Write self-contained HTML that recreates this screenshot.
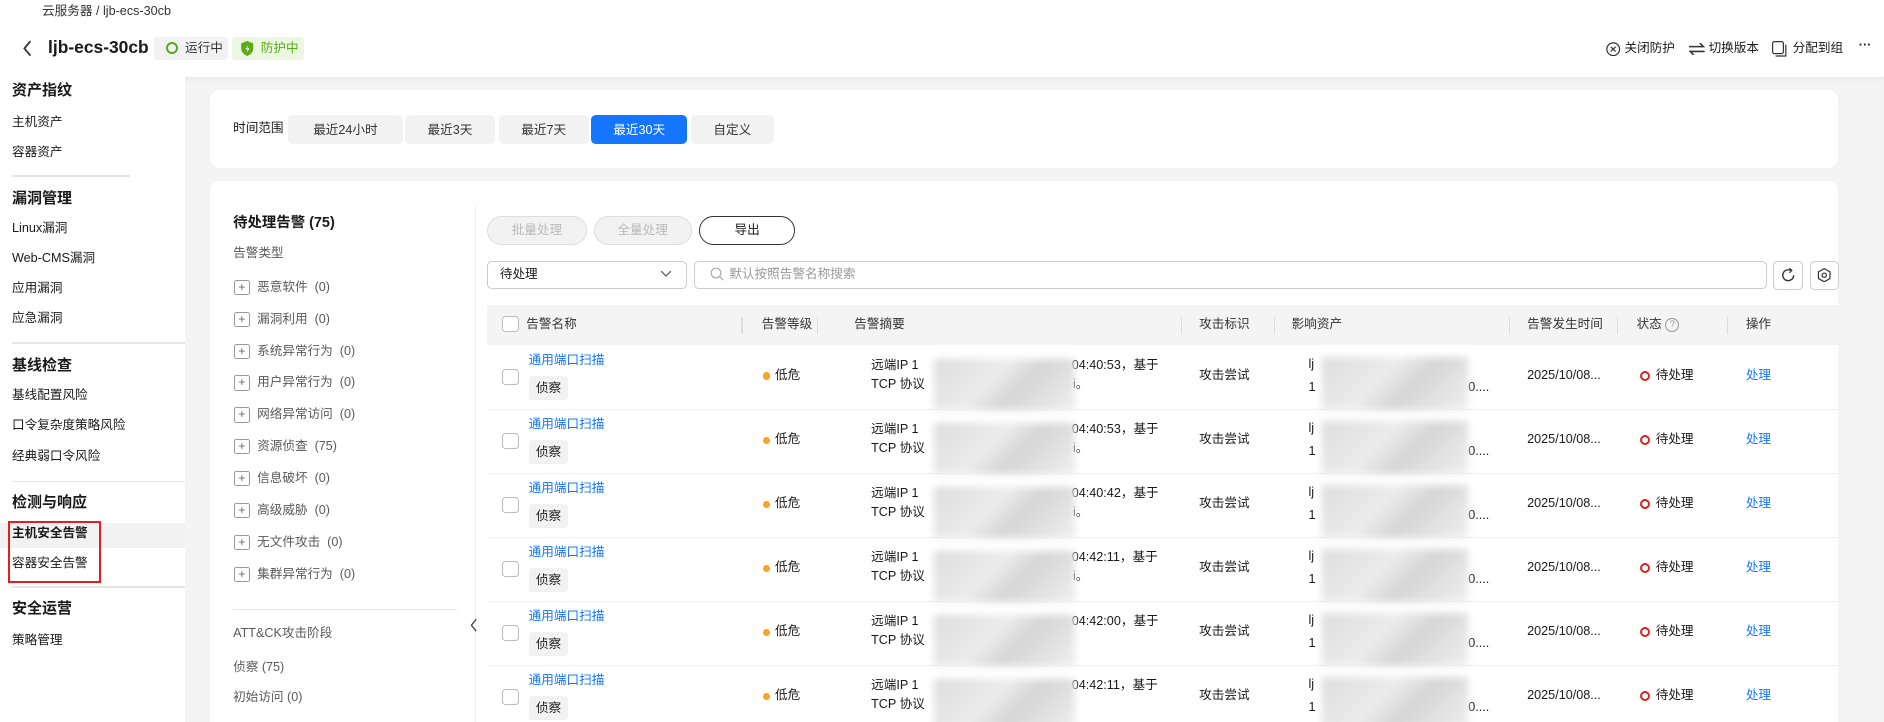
<!DOCTYPE html>
<html><head><meta charset="utf-8"><style>
html,body{margin:0;padding:0;width:1884px;height:722px;overflow:hidden;background:#f4f4f4}
#w{position:relative;width:1568px;height:601px;zoom:1.20153;font-family:"Liberation Sans","Noto Sans CJK SC",sans-serif;font-size:10.5px;line-height:1.25;color:#191919;overflow:hidden;background:#f4f4f4}
.a{position:absolute;white-space:nowrap}
.hdr{left:0;top:0;width:1568px;height:64px;background:#fff;box-shadow:0 2px 4px rgba(0,0,0,.06)}
.side{left:0;top:64px;width:154px;height:537px;background:#fff}
.sh{font-weight:bold;font-size:12.5px}
.div{height:1px;background:#e6e6e6}
.card{background:#fff;border-radius:8px}
.tb{top:96px;height:24px;line-height:25px;text-align:center;background:#f2f2f2;border-radius:4px;color:#333}
.plus{width:11px;height:11px;border:1px solid #999;border-radius:2px;text-align:center;line-height:11px;font-size:10px;color:#666}
.g{color:#595959}
.th{color:#333}
.cd{width:1px;height:14px;background:#ddd}
.cb{width:12px;height:12px;border:1px solid #bbb;border-radius:3px;background:#fff}
.lk{color:#1476ff}
.tag{background:#f2f2f2;border-radius:3px;padding:0 6px;height:20px;line-height:20px}
.blur{background:linear-gradient(135deg,#dcdcdc,#ececec 40%,#d6d6d6 60%,#efefef);filter:blur(3px)}
</style></head><body><div id="w">
<div class="a hdr"></div>
<div class="a" style="left:35px;top:3px;font-size:10.5px;color:#333">云服务器 / ljb-ecs-30cb</div>
<svg class="a" style="left:18px;top:33px" width="10" height="14"><path d="M7 1 L2 7 L7 13" stroke="#333" stroke-width="1.5" fill="none"/></svg>
<div class="a" style="left:40px;top:31px;font-size:14.5px;font-weight:bold">ljb-ecs-30cb</div>
<div class="a" style="left:128px;top:31px;width:62px;height:19px;background:#f2f2f2;border-radius:3px"></div>
<div class="a" style="left:138px;top:35px;width:7px;height:7px;border:2px solid #5aab1b;border-radius:50%"></div>
<div class="a" style="left:154px;top:34px;color:#333">运行中</div>
<div class="a" style="left:193px;top:31px;width:60px;height:19px;background:#ebf7e1;border-radius:3px"></div>
<svg class="a" style="left:200px;top:34px" width="12" height="13"><path d="M6 0 L11 2 V6 C11 9 9 11 6 12.5 C3 11 1 9 1 6 V2Z" fill="#5aab1b"/><path d="M7 3 L4.5 7 H6.5 L5.5 10 L8 6 H6Z" fill="#fff"/></svg>
<div class="a" style="left:217px;top:34px;color:#5aab1b">防护中</div>
<svg class="a" style="left:1337px;top:35px" width="12" height="12"><circle cx="6" cy="6" r="5.3" stroke="#333" fill="none"/><path d="M4 4L8 8M8 4L4 8" stroke="#333"/></svg>
<div class="a" style="left:1352px;top:34px;font-size:10.5px">关闭防护</div>
<svg class="a" style="left:1406px;top:36px" width="13" height="10"><path d="M0 3H12L9 0M13 7H1L4 10" stroke="#333" fill="none" stroke-width="1.3"/></svg>
<div class="a" style="left:1422px;top:34px;font-size:10.5px">切换版本</div>
<svg class="a" style="left:1475px;top:34px" width="12" height="14"><rect x="0.5" y="0.5" width="9" height="10" rx="1.5" stroke="#333" fill="none"/><path d="M11.5 3V12.5H3" stroke="#333" fill="none"/></svg>
<div class="a" style="left:1492px;top:34px;font-size:10.5px">分配到组</div>
<div class="a" style="left:1547px;top:32px;font-weight:bold">···</div>

<div class="a side"></div>
<div class="a sh" style="left:10px;top:68px">资产指纹</div>
<div class="a" style="left:10px;top:96px">主机资产</div>
<div class="a" style="left:10px;top:121px">容器资产</div>
<div class="a div" style="left:10px;top:146px;width:98px"></div>
<div class="a sh" style="left:10px;top:158px">漏洞管理</div>
<div class="a" style="left:10px;top:184px">Linux漏洞</div>
<div class="a" style="left:10px;top:209px">Web-CMS漏洞</div>
<div class="a" style="left:10px;top:234px">应用漏洞</div>
<div class="a" style="left:10px;top:259px">应急漏洞</div>
<div class="a div" style="left:10px;top:285px;width:144px"></div>
<div class="a sh" style="left:10px;top:297px">基线检查</div>
<div class="a" style="left:10px;top:323px">基线配置风险</div>
<div class="a" style="left:10px;top:348px">口令复杂度策略风险</div>
<div class="a" style="left:10px;top:374px">经典弱口令风险</div>
<div class="a div" style="left:10px;top:400px;width:144px"></div>
<div class="a sh" style="left:10px;top:411px">检测与响应</div>
<div class="a" style="left:0;top:435px;width:154px;height:21px;background:#f2f2f2"></div>
<div class="a" style="left:10px;top:438px;font-weight:bold">主机安全告警</div>
<div class="a" style="left:10px;top:463px">容器安全告警</div>
<div class="a" style="left:7px;top:434px;width:74px;height:48px;border:2px solid #e81c1c"></div>
<div class="a div" style="left:10px;top:488px;width:144px"></div>
<div class="a sh" style="left:10px;top:499px">安全运营</div>
<div class="a" style="left:10px;top:527px">策略管理</div>

<div class="a card" style="left:175px;top:75px;width:1355px;height:65px"></div>
<div class="a" style="left:194px;top:101px">时间范围</div>
<div class="a tb" style="left:240px;width:95px">最近24小时</div>
<div class="a tb" style="left:337px;width:75px">最近3天</div>
<div class="a tb" style="left:415px;width:75px">最近7天</div>
<div class="a tb" style="left:492px;width:80px;background:#1476ff;color:#fff">最近30天</div>
<div class="a tb" style="left:575px;width:69px">自定义</div>

<div class="a card" style="left:175px;top:151px;width:1355px;height:470px"></div>
<div class="a" style="left:395px;top:171px;width:1px;height:430px;background:#eee"></div>
<div class="a" style="left:194px;top:178px;font-weight:bold;font-size:12px">待处理告警 (75)</div>
<div class="a g" style="left:194px;top:205px;font-size:10.5px">告警类型</div>
<div id="types"></div>
<div class="a div" style="left:194px;top:507px;width:186px"></div>
<div class="a g" style="left:194px;top:521px;font-size:10.5px">ATT&amp;CK攻击阶段</div>
<div class="a g" style="left:194px;top:549px;font-size:10.5px">侦察 (75)</div>
<div class="a g" style="left:194px;top:574px;font-size:10.5px">初始访问 (0)</div>
<svg class="a" style="left:390px;top:514px" width="8" height="12"><path d="M6 1L2 6L6 11" stroke="#333" fill="none"/></svg>

<div class="a" style="left:405px;top:180px;width:82px;height:22px;border:1px solid #ddd;background:#f2f2f2;border-radius:12px;color:#bbb;text-align:center;line-height:23px">批量处理</div>
<div class="a" style="left:494px;top:180px;width:80px;height:22px;border:1px solid #ddd;background:#f2f2f2;border-radius:12px;color:#bbb;text-align:center;line-height:23px">全量处理</div>
<div class="a" style="left:582px;top:180px;width:78px;height:22px;border:1px solid #333;border-radius:12px;text-align:center;line-height:23px">导出</div>
<div class="a" style="left:405px;top:217px;width:165px;height:22px;border:1px solid #ccc;border-radius:4px"></div>
<div class="a" style="left:416px;top:222px">待处理</div>
<svg class="a" style="left:549px;top:225px" width="10" height="6"><path d="M1 1L5 5L9 1" stroke="#555" fill="none"/></svg>
<div class="a" style="left:578px;top:217px;width:891px;height:22px;border:1px solid #ccc;border-radius:4px"></div>
<svg class="a" style="left:591px;top:222px" width="12" height="12"><circle cx="5" cy="5" r="4" stroke="#aaa" fill="none"/><path d="M8 8L11 11" stroke="#aaa"/></svg>
<div class="a" style="left:607px;top:222px;color:#999;font-size:10.5px">默认按照告警名称搜索</div>
<div class="a" style="left:1476px;top:217px;width:23px;height:23px;border:1px solid #ccc;border-radius:4px"></div>
<svg class="a" style="left:1482px;top:223px" width="12" height="12"><path d="M10.5 6A4.5 4.5 0 1 1 8 2" stroke="#333" fill="none" stroke-width="1.2"/><path d="M7 0L9 2L7 4" stroke="#333" fill="none"/></svg>
<div class="a" style="left:1506px;top:217px;width:23px;height:23px;border:1px solid #ccc;border-radius:4px"></div>
<svg class="a" style="left:1512px;top:223px" width="12" height="12"><path d="M6 .5L10.8 3.2V8.8L6 11.5L1.2 8.8V3.2Z" stroke="#333" fill="none"/><circle cx="6" cy="6" r="1.8" stroke="#333" fill="none"/></svg>

<div class="a" style="left:405px;top:254px;width:1125px;height:33px;background:#f4f4f4"></div>
<div class="a cb" style="left:418px;top:263px"></div>
<div class="a th" style="left:438px;top:264px">告警名称</div>
<div class="a cd" style="left:617px;top:264px"></div><div class="a th" style="left:634px;top:264px">告警等级</div>
<div class="a cd" style="left:680px;top:264px"></div><div class="a th" style="left:711px;top:264px">告警摘要</div>
<div class="a cd" style="left:983px;top:264px"></div><div class="a th" style="left:998px;top:264px">攻击标识</div>
<div class="a cd" style="left:1060px;top:264px"></div><div class="a th" style="left:1075px;top:264px">影响资产</div>
<div class="a cd" style="left:1256px;top:264px"></div><div class="a th" style="left:1271px;top:264px">告警发生时间</div>
<div class="a cd" style="left:1346px;top:264px"></div><div class="a th" style="left:1362px;top:264px">状态</div>
<div class="a" style="left:1386px;top:265px;width:10px;height:10px;border:1px solid #999;border-radius:50%;font-size:8px;line-height:10px;text-align:center;color:#999">?</div>
<div class="a cd" style="left:1437px;top:264px"></div><div class="a th" style="left:1453px;top:264px">操作</div>
<div id="rows"></div>
<script>
var t=["恶意软件  (0)","漏洞利用  (0)","系统异常行为  (0)","用户异常行为  (0)","网络异常访问  (0)","资源侦查  (75)","信息破坏  (0)","高级威胁  (0)","无文件攻击  (0)","集群异常行为  (0)"],h="";
t.forEach(function(s,i){var y=233+i*26.5;h+='<div class="a plus" style="left:195px;top:'+y+'px">+</div><div class="a g" style="left:214px;top:'+y+'px;font-size:10.5px;white-space:pre">'+s+'</div>';});
document.getElementById("types").outerHTML=h;
var tm=["04:40:53","04:40:53","04:40:42","04:42:11","04:42:00","04:42:11"],r="";
tm.forEach(function(x,i){var y=287+i*53.3,c=y+26;
r+='<div class="a" style="left:405px;top:'+(y+53)+'px;width:1125px;height:1px;background:#eee"></div>';
r+='<div class="a cb" style="left:418px;top:'+(c-6)+'px"></div>';
r+='<div class="a lk" style="left:440px;top:'+(y+7)+'px">通用端口扫描</div>';
r+='<div class="a tag" style="left:440px;top:'+(y+26)+'px">侦察</div>';
r+='<div class="a" style="left:635px;top:'+(c-3)+'px;width:6px;height:6px;border-radius:50%;background:#f5a623"></div><div class="a" style="left:645px;top:'+(c-7)+'px">低危</div>';
r+='<div class="a" style="left:725px;top:'+(y+11)+'px">远端IP 1</div><div class="a" style="left:892px;top:'+(y+11)+'px">'+x+'，基于</div>';
r+='<div class="a" style="left:725px;top:'+(y+27)+'px">TCP 协议</div>'+(i<4?'<div class="a" style="left:893px;top:'+(y+27)+'px">i。</div>':'');
r+='<div class="a blur" style="left:777px;top:'+(y+12)+'px;width:118px;height:42px"></div>';
r+='<div class="a" style="left:998px;top:'+(c-7)+'px">攻击尝试</div>';
r+='<div class="a" style="left:1089px;top:'+(y+10)+'px">lj</div><div class="a" style="left:1089px;top:'+(y+29)+'px">1</div><div class="a" style="left:1222px;top:'+(y+29)+'px">0....</div>';
r+='<div class="a blur" style="left:1100px;top:'+(y+10)+'px;width:122px;height:44px"></div>';
r+='<div class="a" style="left:1271px;top:'+(c-7)+'px">2025/10/08...</div>';
r+='<div class="a" style="left:1365px;top:'+(c-4)+'px;width:5px;height:5px;border:2px solid #e81c1c;border-radius:50%"></div><div class="a" style="left:1378px;top:'+(c-7)+'px">待处理</div>';
r+='<div class="a lk" style="left:1453px;top:'+(c-7)+'px">处理</div>';});
document.getElementById("rows").outerHTML=r;
</script>
</div></body></html>
